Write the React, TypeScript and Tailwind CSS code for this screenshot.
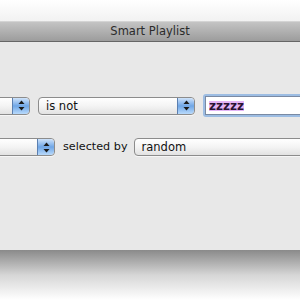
import React from "react";

const font = { fontFamily: '"DejaVu Sans", "Liberation Sans", sans-serif' };

const Arrows = () => (
  <div className="w-[17px] h-full rounded-r-[4px] border-l border-[#5b7fb0] bg-gradient-to-b from-[#cfe3fa] via-[#6fa6e6] to-[#b9dafb] flex items-center justify-center">
    <svg width="7" height="11" viewBox="0 0 7 11">
      <path d="M3.5 0.5 L6.5 4 L0.5 4 Z" fill="#1a1a1a" />
      <path d="M3.5 10.5 L6.5 7 L0.5 7 Z" fill="#1a1a1a" />
    </svg>
  </div>
);

const Popup = ({ label, className }: { label?: string; className: string }) => (
  <div
    className={`h-[18px] flex rounded-[4px] border border-[#8c8c8c] bg-gradient-to-b from-white via-[#f4f4f4] to-[#e2e2e2] shadow-[0_1px_0_#f6f6f6] ${className}`}
  >
    <div className="flex-1 pl-[7px] text-[11.5px] leading-[16px] text-[#111]">{label}</div>
    <Arrows />
  </div>
);

export default function App() {
  return (
    <div className="w-[300px] h-[300px] overflow-hidden bg-white flex flex-col" style={font}>
      <div className="h-[21px] bg-gradient-to-b from-white to-[#f2f2f2]" />
      <div className="h-[21px] border-t border-[#d4d4d4] border-b border-b-[#666] bg-gradient-to-b from-[#c4c4c4] to-[#9c9c9c] flex items-center justify-center text-[11.5px] text-[#2b2b2b]">
        Smart Playlist
      </div>
      <div className="h-[208px] bg-[#e8e8e8] pt-[52px]">
        <div className="flex items-center">
          <Popup className="w-[60px] ml-[-30px] shrink-0" />
          <Popup label="is not" className="w-[157px] ml-[8px] shrink-0" />
          <div className="ml-[8px] shrink-0 w-[120px] h-[23px] rounded-[3px] bg-[#9dbde3] p-[2px]">
            <div className="h-full bg-white border border-[#7a8aa3] pl-[3px] flex items-center">
              <span className="bg-[#e3b4f5] text-[#2a1233] text-[12px] font-bold leading-[10px]">zzzzz</span>
            </div>
          </div>
        </div>
        <div className="flex items-center mt-[21px]">
          <Popup className="w-[85px] ml-[-30px] shrink-0" />
          <div className="ml-[8px] text-[11.2px] text-[#111] shrink-0">selected by</div>
          <Popup label="random" className="w-[200px] ml-[6px] shrink-0" />
        </div>
      </div>
      <div className="flex-1 bg-gradient-to-b from-[#8a8a8a] via-[#d6d6d6] to-white" />
    </div>
  );
}
